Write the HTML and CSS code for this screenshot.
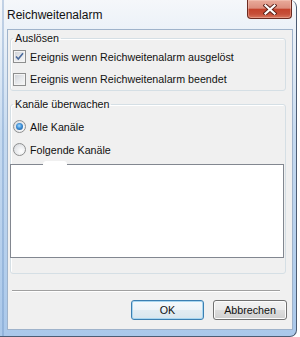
FILE: index.html
```html
<!DOCTYPE html>
<html lang="de">
<head>
<meta charset="utf-8">
<title>Reichweitenalarm</title>
<link rel="stylesheet" href="styles.css">
</head>
<body>
<div class="window">
  <div class="titlebar">
    <span class="title">Reichweitenalarm</span>
    <button class="close" aria-label="Schließen">
      <svg width="14" height="11" viewBox="0 0 14 11">
        <path d="M2.5 1.5 L11.5 9.5 M11.5 1.5 L2.5 9.5" stroke="#5a2018" stroke-width="4" stroke-linecap="square" fill="none"/>
        <path d="M2.5 1.5 L11.5 9.5 M11.5 1.5 L2.5 9.5" stroke="#ffffff" stroke-width="2.2" stroke-linecap="square" fill="none"/>
      </svg>
    </button>
  </div>
  <div class="client">
    <fieldset class="group g1">
      <legend>Auslösen</legend>
      <label class="row"><span class="check"><svg width="11" height="11" viewBox="0 0 11 11"><path d="M2 5.5 L4.3 8 L9 2.2" stroke="#4a6a9c" stroke-width="1.6" fill="none"/></svg></span>Ereignis wenn Reichweitenalarm ausgelöst</label>
      <label class="row r2"><span class="check"></span>Ereignis wenn Reichweitenalarm beendet</label>
    </fieldset>
    <fieldset class="group g2">
      <legend>Kanäle überwachen</legend>
      <label class="row"><span class="radio on"></span>Alle Kanäle</label>
      <label class="row"><span class="radio"></span>Folgende Kanäle</label>
      <div class="list"><span class="blob"></span></div>
    </fieldset>
    <div class="sep"></div>
    <div class="buttons">
      <button class="btn default">OK</button>
      <button class="btn">Abbrechen</button>
    </div>
  </div>
</div>
</body>
</html>
```

FILE: styles.css
```css
* { box-sizing: border-box; }

body {
  margin: 0;
  background: #ffffff;
  font-family: "Liberation Sans", Arial, sans-serif;
  font-size: 10.7px;
  color: #111;
}

.window {
  width: 297px;
  height: 337px;
  display: flex;
  flex-direction: column;
  padding: 0 3px 6px 7px;
  border-right: 1px solid #4c5d74;
  border-bottom: 1px solid #4c5d74;
  border-radius: 0 7px 7px 0;
  background:
    linear-gradient(90deg, transparent 2px, rgba(100, 140, 190, 0.35) 2px, rgba(100, 140, 190, 0.35) 4px, transparent 4px),
    linear-gradient(180deg, #f5f7fa 0%, #e6eef7 14%, #c6daf0 40%, #aac8ea 100%);
}

.titlebar {
  height: 29px;
  flex: none;
  display: flex;
  align-items: flex-start;
  justify-content: space-between;
}

.title {
  font-size: 12px;
  line-height: 15px;
  margin-top: 8px;
}

.close {
  width: 45px;
  height: 19px;
  margin-right: 1px;
  padding: 0;
  border: 1px solid #6b2a20;
  border-top: none;
  border-radius: 0 0 4px 4px;
  background: linear-gradient(180deg, #e9ab9b 0%, #dc8e7d 45%, #c4432c 52%, #c64f39 78%, #d8775f 100%);
  box-shadow: inset 0 0 0 1px rgba(255, 220, 210, 0.35);
  display: flex;
  align-items: center;
  justify-content: center;
}

.client {
  flex: 1;
  display: flex;
  flex-direction: column;
  border: 1px solid #9fb3cb;
  background: #f0f0f0;
}

.group {
  margin: 2px 6px 0 2px;
  padding: 0 0 0 2px;
  border: 1px solid #d5dfe5;
  border-radius: 3px;
  min-width: 0;
  box-shadow: inset 1px 1px 0 #fff;
}

.group legend {
  padding: 0 2px;
  margin-left: 0;
  line-height: 13px;
}

.g2 {
  margin-top: 7px;
  padding-top: 4px;
  padding-bottom: 15px;
}

.row {
  display: flex;
  align-items: center;
  gap: 4px;
  height: 23px;
}

.r2 { height: 22px; }

.check {
  width: 13px;
  height: 13px;
  flex: none;
  border: 1px solid #8e8f8f;
  background: linear-gradient(135deg, #cbcfd5 0%, #e6e8eb 50%, #f8f8f8 100%);
  box-shadow: inset 0 0 0 1px #f4f4f4;
  display: flex;
}

.radio {
  width: 13px;
  height: 13px;
  flex: none;
  border-radius: 50%;
  border: 1px solid #8e8f8f;
  background: radial-gradient(circle at 65% 65%, #ffffff 0%, #e4e6e9 60%, #cfd3d8 100%);
  position: relative;
}

.radio.on::after {
  content: "";
  position: absolute;
  left: 2px;
  top: 2px;
  width: 7px;
  height: 7px;
  border-radius: 50%;
  background: radial-gradient(circle at 45% 40%, #a9dcff 0%, #3d8fd6 45%, #1b4f8c 100%);
}

.list {
  position: relative;
  width: 274px;
  height: 94px;
  margin: 3px 0 0 -3px;
  background: #fff;
  border: 1px solid #828790;
}

.blob {
  position: absolute;
  left: 32px;
  top: -4px;
  width: 24px;
  height: 7px;
  border-radius: 4px;
  background: #fff;
}

.sep {
  height: 2px;
  margin: 16px 12px 0 4px;
  border-top: 1px solid #a0a0a0;
  border-bottom: 1px solid #ffffff;
}

.buttons {
  display: flex;
  justify-content: flex-end;
  gap: 9px;
  margin: 8px 5px 0 0;
}

.btn {
  width: 73px;
  height: 20px;
  padding: 0;
  font-family: inherit;
  font-size: 10.7px;
  color: #111;
  border: 1px solid #707070;
  border-radius: 3px;
  background: linear-gradient(180deg, #f2f2f2 0%, #ebebeb 48%, #dddddd 52%, #cfcfcf 100%);
  box-shadow: inset 0 0 0 1px #fcfcfc;
}

.btn + .btn { width: 74px; }

.btn.default {
  border-color: #3c7fb1;
  background: linear-gradient(180deg, #f4f9fc 0%, #eef4f8 48%, #e2ecf2 52%, #d8e6ee 100%);
  box-shadow: inset 0 0 0 1px #a8d6f0;
}
```
